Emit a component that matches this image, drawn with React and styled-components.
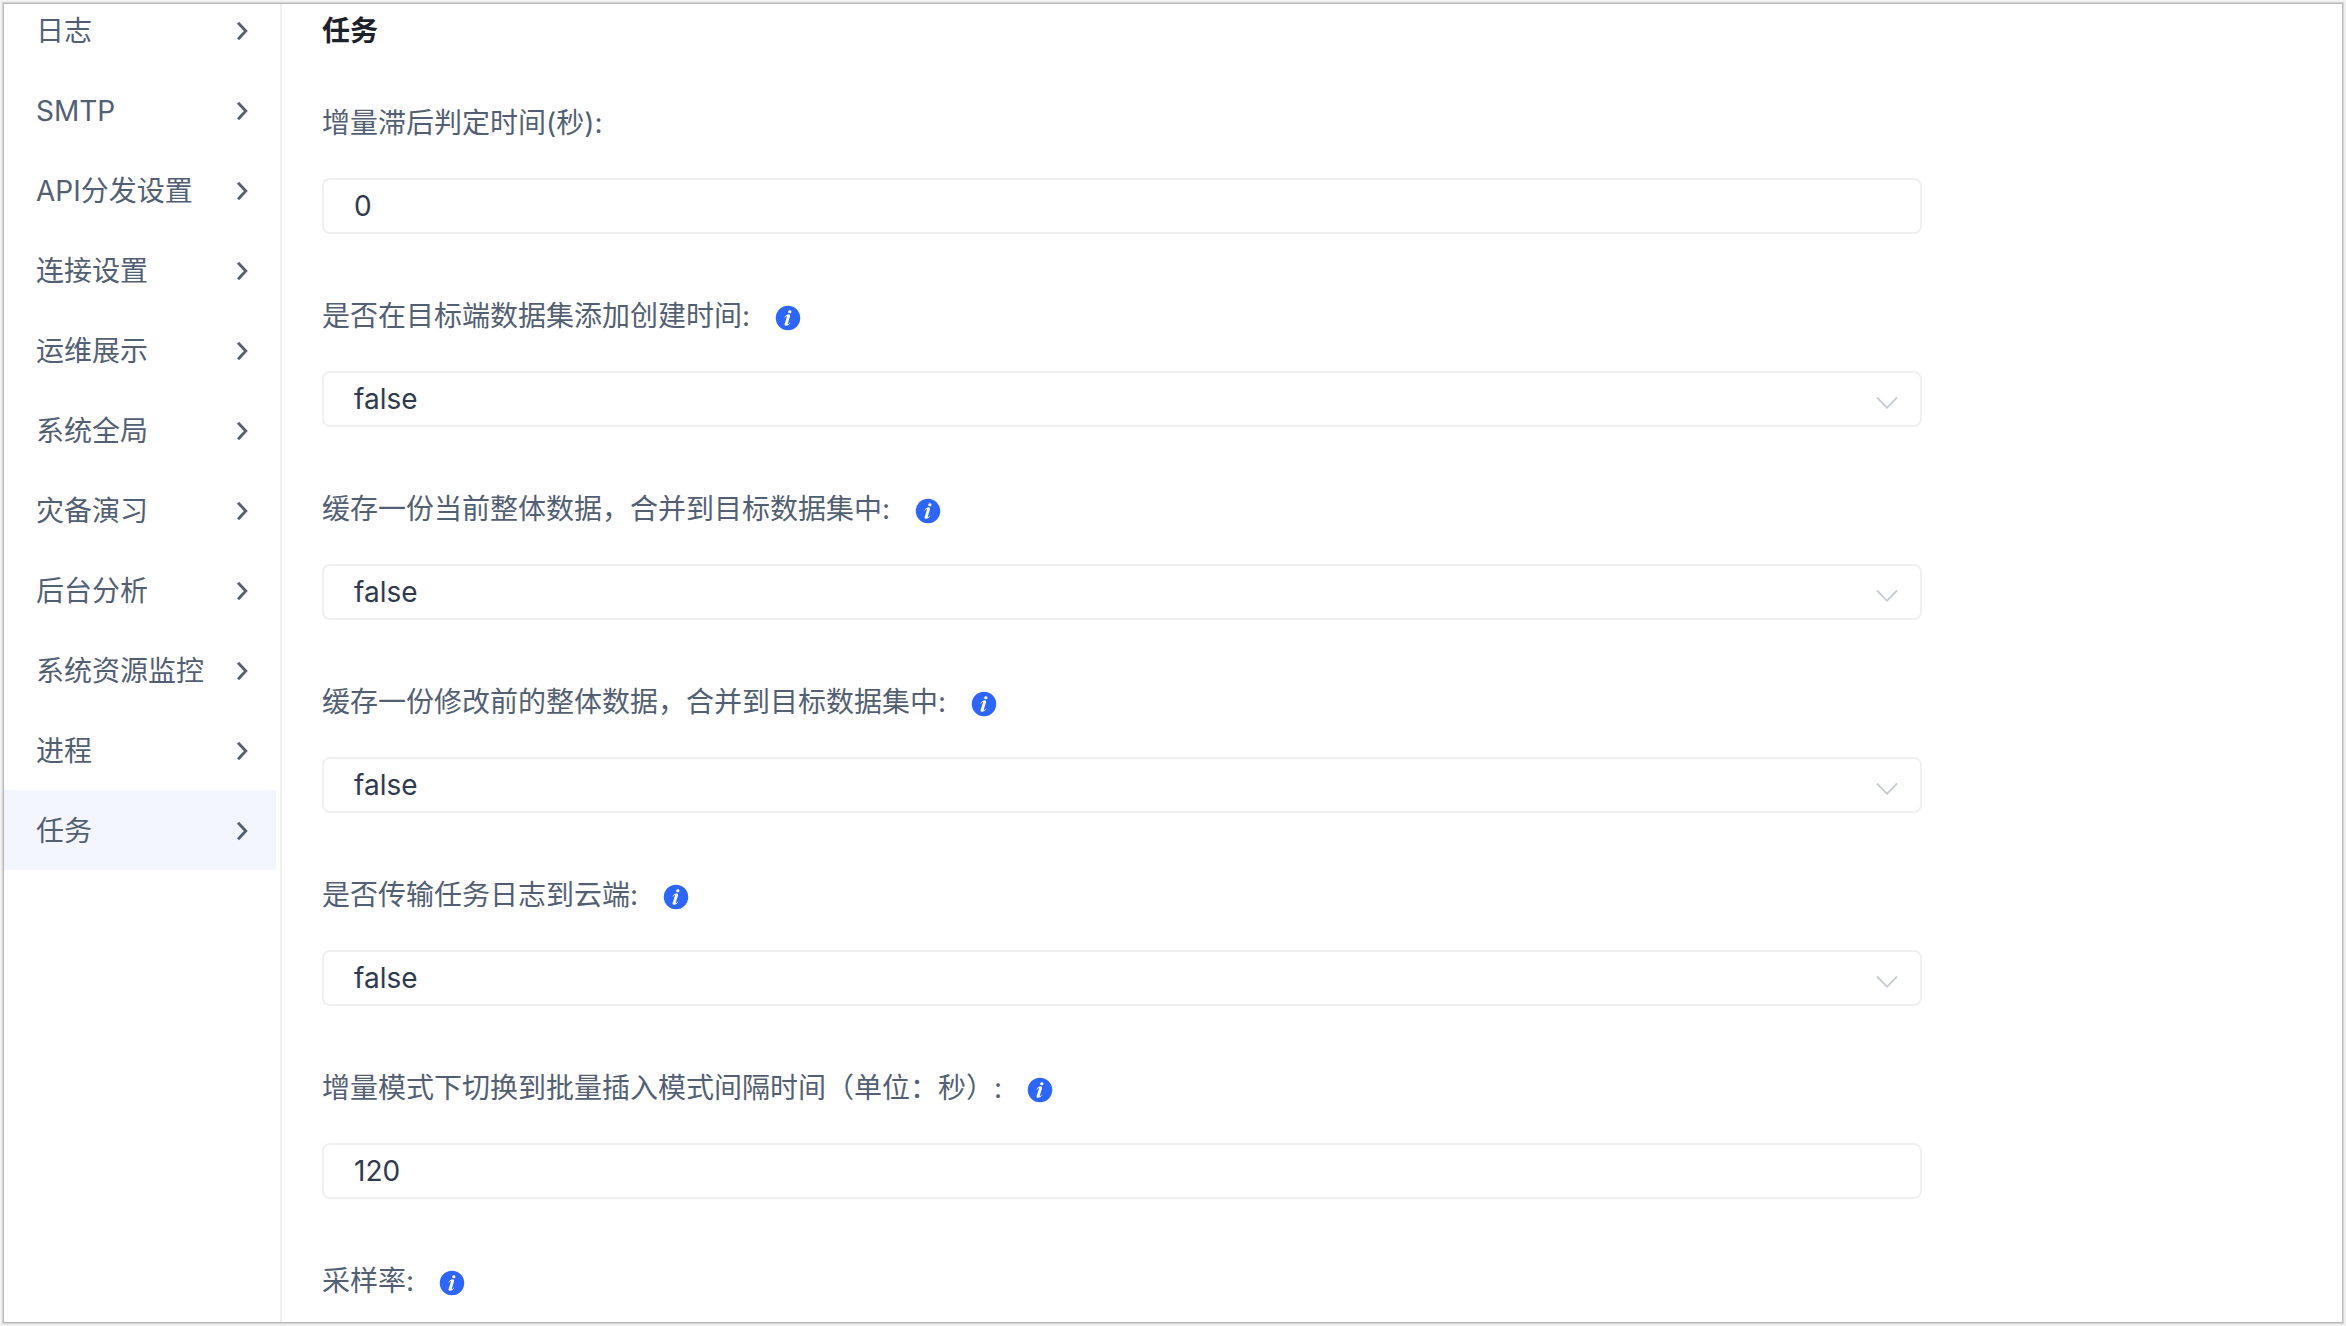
import React from "react";
import styled, { createGlobalStyle } from "styled-components";

const GlobalStyle = createGlobalStyle`
  *, *::before, *::after { box-sizing: border-box; }
  body {
    margin: 0;
    background: #f4f4f4;
    color: #535f72;
    font-family: Inter, "Noto Sans CJK SC", sans-serif;
    font-size: 28px;
    line-height: 40px;
  }
`;

const Frame = styled.div`
  padding: 4px;
  height: 100vh;
`;

const Panel = styled.div`
  display: flex;
  height: 100%;
  overflow: hidden;
  background: #fff;
  box-shadow: 0 0 0 1px #b8b8b8, 0 0 0 2px #d6d6d6, 0 0 0 3px #ebebeb;
`;

const Sidebar = styled.nav`
  flex: none;
  width: 278px;
  padding-right: 4px;
  border-right: 2px solid #f0f0f1;
`;

const Menu = styled.ul`
  margin: -14px 0 0;
  padding: 0;
  list-style: none;
`;

const MenuLink = styled.a`
  display: flex;
  align-items: center;
  justify-content: space-between;
  height: 80px;
  padding: 1px 28px 0 32px;
  background: ${({ $active }) => ($active ? "#f3f6fe" : "transparent")};
  color: inherit;
  text-decoration: none;
  white-space: nowrap;
`;

const Content = styled.main`
  flex: 1;
  min-width: 0;
  padding: 7px 40px 0;
`;

const Title = styled.h1`
  margin: 0 0 44px;
  color: #1d2129;
  font-size: 28px;
  font-weight: 700;
  line-height: 40px;
`;

const Form = styled.form`
  display: flex;
  flex-direction: column;
  gap: 54px;
  max-width: 1600px;
`;

const Field = styled.div`
  display: flex;
  flex-direction: column;
  gap: 27px;
`;

const LabelRow = styled.div`
  display: flex;
  align-items: center;
  gap: 24px;
  height: 56px;
`;

const InfoIcon = styled.svg`
  width: 28px;
  height: 28px;
  margin-top: 4px;
  fill: #2c65ff;
`;

const controlStyles = `
  display: block;
  width: 100%;
  height: 56px;
  margin: 0;
  padding: 0 30px;
  border: 2px solid #f0f0f1;
  border-radius: 8px;
  outline: none;
  background: #fff;
  color: #2f3b4c;
  font: inherit;
`;

const TextInput = styled.input`
  ${controlStyles}
`;

const SelectWrap = styled.div`
  position: relative;
`;

const Select = styled.select`
  ${controlStyles}
  appearance: none;
`;

const SelectArrow = styled.svg`
  position: absolute;
  top: 25px;
  right: 24px;
  width: 22px;
  height: 14px;
  pointer-events: none;
`;

const menu = [
  "日志",
  "SMTP",
  "API分发设置",
  "连接设置",
  "运维展示",
  "系统全局",
  "灾备演习",
  "后台分析",
  "系统资源监控",
  "进程",
  "任务",
];

const fields = [
  { id: "lag", label: "增量滞后判定时间(秒):", value: "0" },
  { id: "created", label: "是否在目标端数据集添加创建时间:", select: true, info: true },
  { id: "current", label: "缓存一份当前整体数据，合并到目标数据集中:", select: true, info: true },
  { id: "before", label: "缓存一份修改前的整体数据，合并到目标数据集中:", select: true, info: true },
  { id: "cloud", label: "是否传输任务日志到云端:", select: true, info: true },
  { id: "interval", label: "增量模式下切换到批量插入模式间隔时间（单位：秒）:", value: "120", info: true },
  { id: "sample", label: "采样率:", value: "", info: true },
];

const ChevronRight = () => (
  <svg width="12" height="20" viewBox="0 0 12 20" fill="none" stroke="#535f72" strokeWidth="2.8" aria-hidden="true">
    <path d="M2 1.8 9.8 10 2 18.2" />
  </svg>
);

const Info = () => (
  <InfoIcon viewBox="0 0 1024 1024" aria-hidden="true">
    <path d="M512 64a448 448 0 1 1 0 896.064A448 448 0 0 1 512 64zm67.2 275.072c33.28 0 60.288-23.104 60.288-57.344s-27.072-57.344-60.288-57.344c-33.28 0-60.16 23.104-60.16 57.344s26.88 57.344 60.16 57.344zM590.912 699.2c0-6.848 2.368-24.64 1.024-34.752l-52.608 60.544c-10.88 11.456-24.512 19.392-30.912 17.28a12.992 12.992 0 0 1-8.256-14.72l87.68-276.992c7.168-35.136-12.544-67.2-54.336-71.296-44.096 0-108.992 44.736-148.48 101.504 0 6.784-1.28 23.68.064 33.792l52.544-60.608c10.88-11.328 23.552-19.328 29.952-17.152a12.8 12.8 0 0 1 7.808 16.128L388.48 728.576c-10.048 32.256 8.96 63.872 55.04 71.04 67.84 0 107.904-43.648 147.456-100.416z" />
  </InfoIcon>
);

function FormField({ id, label, value, select, info }) {
  return (
    <Field>
      <LabelRow>
        <label htmlFor={id}>{label}</label>
        {info && <Info />}
      </LabelRow>
      {select ? (
        <SelectWrap>
          <Select id={id} defaultValue="false">
            <option>false</option>
            <option>true</option>
          </Select>
          <SelectArrow viewBox="0 0 22 14" fill="none" stroke="#c6cad2" strokeWidth="1.8" aria-hidden="true">
            <path d="M1 1.5 11 11.8 21 1.5" />
          </SelectArrow>
        </SelectWrap>
      ) : (
        <TextInput id={id} type="text" defaultValue={value} />
      )}
    </Field>
  );
}

export default function App() {
  return (
    <Frame>
      <GlobalStyle />
      <Panel>
        <Sidebar>
          <Menu>
            {menu.map((name) => (
              <li key={name}>
                <MenuLink href="#" $active={name === "任务"}>
                  {name}
                  <ChevronRight />
                </MenuLink>
              </li>
            ))}
          </Menu>
        </Sidebar>
        <Content>
          <Title>任务</Title>
          <Form>
            {fields.map((field) => (
              <FormField key={field.id} {...field} />
            ))}
          </Form>
        </Content>
      </Panel>
    </Frame>
  );
}
